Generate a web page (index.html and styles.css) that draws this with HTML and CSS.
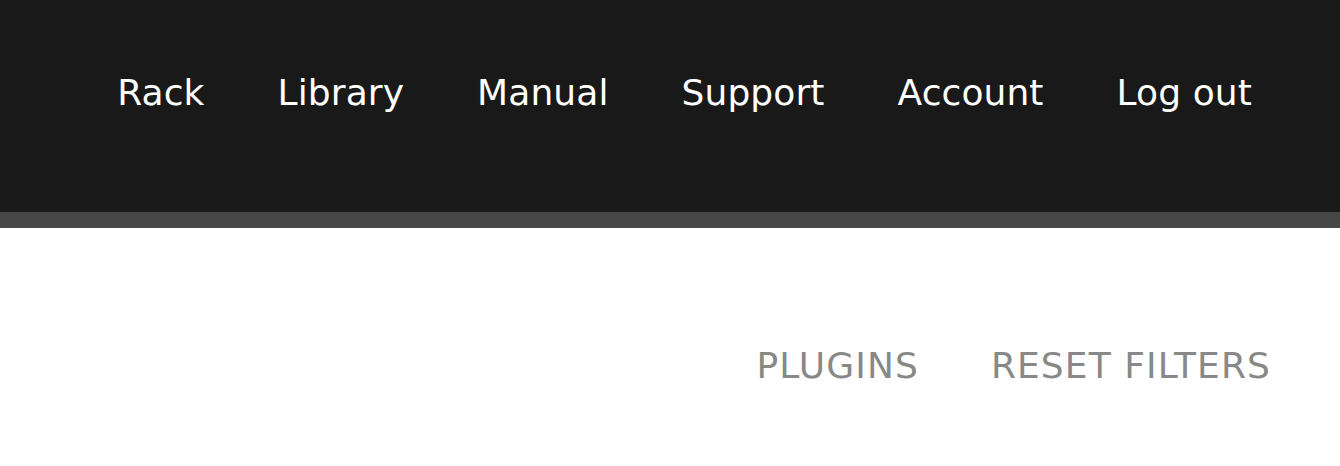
FILE: index.html
```html
<!DOCTYPE html>
<html lang="en">
<head>
<meta charset="utf-8">
<title>Rack</title>
<link rel="stylesheet" href="styles.css">
</head>
<body>
<header class="site-header">
  <nav class="main-nav">
    <a href="#" class="nav-link">Rack</a>
    <a href="#" class="nav-link">Library</a>
    <a href="#" class="nav-link">Manual</a>
    <a href="#" class="nav-link">Support</a>
    <a href="#" class="nav-link">Account</a>
    <a href="#" class="nav-link">Log out</a>
  </nav>
</header>
<div class="header-bar"></div>
<main class="content">
  <div class="filter-actions">
    <a href="#" class="filter-link">PLUGINS</a>
    <a href="#" class="filter-link">RESET FILTERS</a>
  </div>
</main>
</body>
</html>
```

FILE: styles.css
```css
html, body {
  margin: 0;
  padding: 0;
  background: #ffffff;
}

body {
  font-family: "DejaVu Sans", "Noto Sans", sans-serif;
}

.site-header {
  background: #191919;
  height: 212px;
  box-sizing: border-box;
  padding: 75px 88px 0 0;
}

.main-nav {
  display: flex;
  justify-content: flex-end;
  gap: 73px;
}

.nav-link {
  color: #ffffff;
  text-decoration: none;
  font-size: 36px;
  line-height: 1;
  letter-spacing: 0.1px;
}

.header-bar {
  height: 16px;
  background: #474747;
}

.content {
  padding: 120px 69px 0 0;
}

.filter-actions {
  display: flex;
  justify-content: flex-end;
  gap: 72px;
}

.filter-link {
  color: #888888;
  text-decoration: none;
  font-size: 36px;
  line-height: 1;
  letter-spacing: 1.1px;
}
```
